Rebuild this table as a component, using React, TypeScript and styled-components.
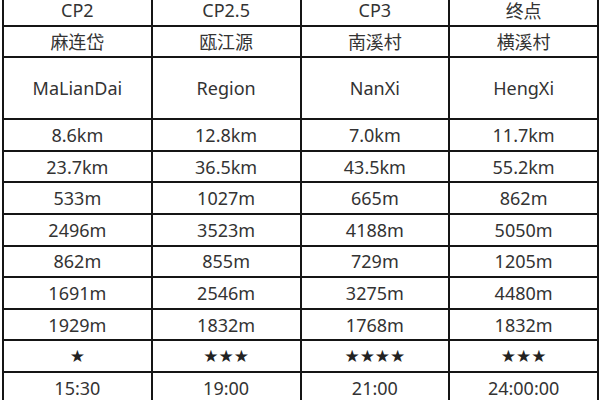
import React from "react";
import styled, { createGlobalStyle } from "styled-components";

const GlobalStyle = createGlobalStyle`
  html, body {
    margin: 0;
    padding: 0;
    background: #ffffff;
    overflow: hidden;
  }
  body {
    font-family: "Noto Sans", "Noto Sans CJK SC", sans-serif;
    color: #333;
  }
`;

const Page = styled.div`
  width: 600px;
  height: 400px;
  overflow: hidden;
  background: #fff;
`;

const Table = styled.table`
  border-collapse: collapse;
  table-layout: fixed;
  width: 597px;
  margin: -7px 0 0 2px;
`;

const Cell = styled.td<{ $tall?: boolean }>`
  border: 2px solid #151515;
  height: ${(p) => (p.$tall ? 60 : 29.6)}px;
  padding: 0;
  text-align: center;
  vertical-align: middle;
  font-size: 18px;
  line-height: 20px;
  color: #333;
`;

const CjkCell = styled(Cell)`
  font-family: "Noto Sans CJK SC", "Noto Sans", sans-serif;
  font-size: 18px;
`;

const Stars = styled(Cell)`
  font-family: "DejaVu Sans", sans-serif;
  font-size: 17px;
  color: #222;
`;

const rows: string[][] = [
  ["8.6km", "12.8km", "7.0km", "11.7km"],
  ["23.7km", "36.5km", "43.5km", "55.2km"],
  ["533m", "1027m", "665m", "862m"],
  ["2496m", "3523m", "4188m", "5050m"],
  ["862m", "855m", "729m", "1205m"],
  ["1691m", "2546m", "3275m", "4480m"],
  ["1929m", "1832m", "1768m", "1832m"],
];

export default function App() {
  return (
    <Page>
      <GlobalStyle />
      <Table>
        <tbody>
          <tr>
            <Cell>CP2</Cell>
            <Cell>CP2.5</Cell>
            <Cell>CP3</Cell>
            <CjkCell>终点</CjkCell>
          </tr>
          <tr>
            <CjkCell>麻连岱</CjkCell>
            <CjkCell>瓯江源</CjkCell>
            <CjkCell>南溪村</CjkCell>
            <CjkCell>横溪村</CjkCell>
          </tr>
          <tr>
            <Cell $tall>MaLianDai</Cell>
            <Cell $tall>Region</Cell>
            <Cell $tall>NanXi</Cell>
            <Cell $tall>HengXi</Cell>
          </tr>
          {rows.map((r, i) => (
            <tr key={i}>
              {r.map((v, j) => (
                <Cell key={j}>{v}</Cell>
              ))}
            </tr>
          ))}
          <tr>
            <Stars>★</Stars>
            <Stars>★★★</Stars>
            <Stars>★★★★</Stars>
            <Stars>★★★</Stars>
          </tr>
          <tr>
            <Cell>15:30</Cell>
            <Cell>19:00</Cell>
            <Cell>21:00</Cell>
            <Cell>24:00:00</Cell>
          </tr>
        </tbody>
      </Table>
    </Page>
  );
}
